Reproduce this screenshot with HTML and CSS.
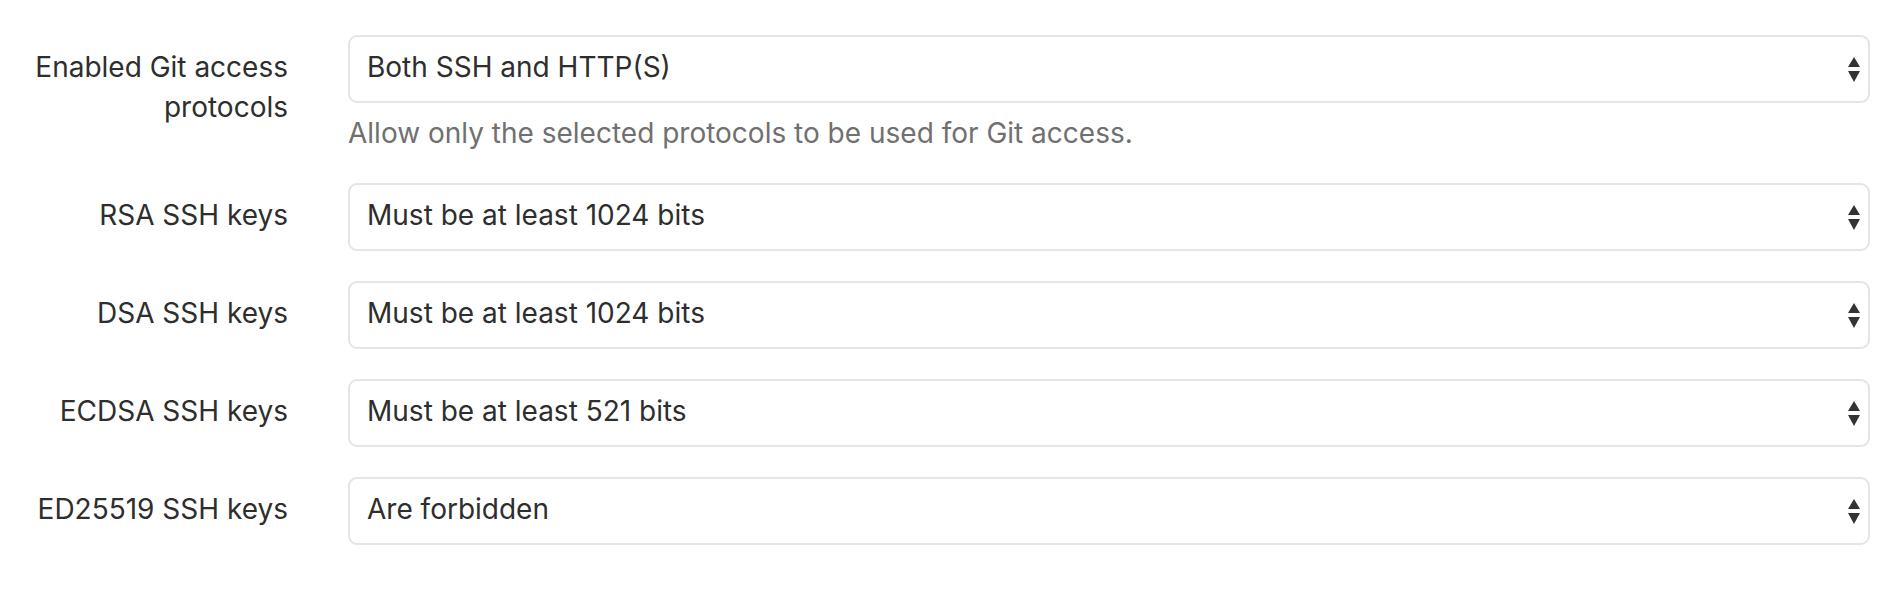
FILE: index.html
```html
<!DOCTYPE html>
<html lang="en">
<head>
<meta charset="utf-8">
<title>Git access settings</title>
<link rel="stylesheet" href="styles.css">
</head>
<body>
<form class="settings">
  <div class="row">
    <label class="label">Enabled Git access<br>protocols</label>
    <div class="field">
      <div class="select"><span class="value">Both SSH and HTTP(S)</span><svg class="arrows" width="12" height="25" viewBox="0 0 12 25"><polygon points="0,10 6,0 12,10"/><polygon points="0,14 12,14 6,25"/></svg></div>
      <p class="help">Allow only the selected protocols to be used for Git access.</p>
    </div>
  </div>
  <div class="row">
    <label class="label">RSA SSH keys</label>
    <div class="field">
      <div class="select"><span class="value">Must be at least 1024 bits</span><svg class="arrows" width="12" height="25" viewBox="0 0 12 25"><polygon points="0,10 6,0 12,10"/><polygon points="0,14 12,14 6,25"/></svg></div>
    </div>
  </div>
  <div class="row">
    <label class="label">DSA SSH keys</label>
    <div class="field">
      <div class="select"><span class="value">Must be at least 1024 bits</span><svg class="arrows" width="12" height="25" viewBox="0 0 12 25"><polygon points="0,10 6,0 12,10"/><polygon points="0,14 12,14 6,25"/></svg></div>
    </div>
  </div>
  <div class="row">
    <label class="label">ECDSA SSH keys</label>
    <div class="field">
      <div class="select"><span class="value">Must be at least 521 bits</span><svg class="arrows" width="12" height="25" viewBox="0 0 12 25"><polygon points="0,10 6,0 12,10"/><polygon points="0,14 12,14 6,25"/></svg></div>
    </div>
  </div>
  <div class="row">
    <label class="label">ED25519 SSH keys</label>
    <div class="field">
      <div class="select"><span class="value">Are forbidden</span><svg class="arrows" width="12" height="25" viewBox="0 0 12 25"><polygon points="0,10 6,0 12,10"/><polygon points="0,14 12,14 6,25"/></svg></div>
    </div>
  </div>
</form>
</body>
</html>
```
FILE: styles.css
```css
html, body {
  margin: 0;
  padding: 0;
  background: #ffffff;
}
body {
  font-family: Inter, "Noto Sans", "Liberation Sans", sans-serif;
  font-size: 28px;
  line-height: 40px;
  color: #2e2e2e;
}
.settings {
  padding: 35px 28px 0 0;
  margin: 0;
}
.row {
  display: grid;
  grid-template-columns: 318px 1fr;
  margin-bottom: 30px;
}
.label {
  text-align: right;
  padding: 12px 30px 0 0;
}
.field {
  padding-left: 30px;
}
.select {
  box-sizing: border-box;
  height: 68px;
  border: 2px solid #e5e5e5;
  border-radius: 9px;
  display: flex;
  align-items: center;
  justify-content: space-between;
  padding: 0 8px 0 17px;
  background: #ffffff;
}
.value {
  padding-bottom: 4px;
}
.arrows {
  fill: #333333;
  display: block;
}
.help {
  margin: 10px 0 0 0;
  color: #707070;
}
```
